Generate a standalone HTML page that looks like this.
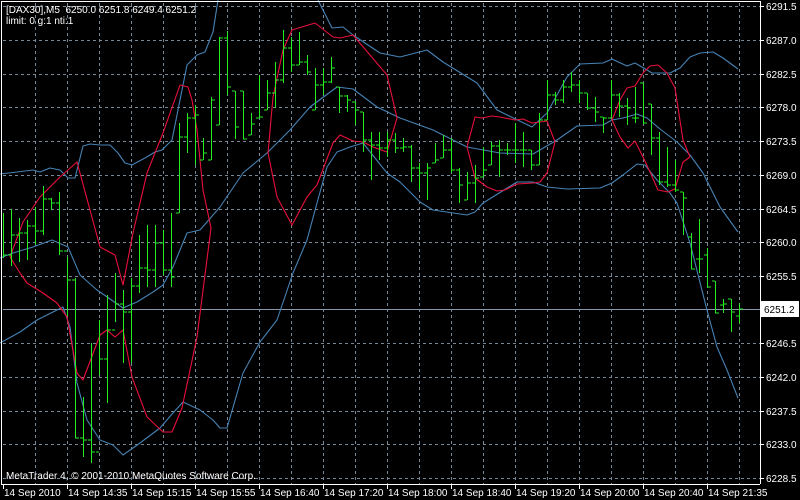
<!DOCTYPE html>
<html><head><meta charset="utf-8"><style>
html,body{margin:0;padding:0;background:#000;width:800px;height:500px;overflow:hidden}
svg{display:block}
text{font-family:"Liberation Sans",sans-serif;font-size:10px;fill:#fff}
</style></head><body>
<svg width="800" height="500" viewBox="0 0 800 500" xmlns="http://www.w3.org/2000/svg">
<rect width="800" height="500" fill="#000"/>
<g stroke="#778899" stroke-width="1" stroke-dasharray="3,3" shape-rendering="crispEdges">
<path d="M3 6.5H760M3 40.5H760M3 74.5H760M3 107.5H760M3 141.5H760M3 175.5H760M3 209.5H760M3 242.5H760M3 276.5H760M3 343.5H760M3 377.5H760M3 411.5H760M3 444.5H760M3 478.5H760"/>
<path d="M35.5 3V484M67.5 3V484M99.5 3V484M131.5 3V484M163.5 3V484M195.5 3V484M227.5 3V484M259.5 3V484M291.5 3V484M323.5 3V484M355.5 3V484M387.5 3V484M419.5 3V484M451.5 3V484M483.5 3V484M515.5 3V484M547.5 3V484M579.5 3V484M611.5 3V484M643.5 3V484M675.5 3V484M707.5 3V484M739.5 3V484"/>
</g>
<path d="M3 309.5H760" stroke="#8796aa" stroke-width="1" shape-rendering="crispEdges"/>
<g fill="none" stroke-width="1.1" stroke-linejoin="round">
<polyline stroke="#4682b4" points="0,174 17,172 33,170 40,172 50,168 60,170 68,178 75,178 83,146 90,144 100,145 110,145 118,153 125,163 132,165 145,158 155,152 162,150 172,140 180,100 187,65 197,55 205,52 213,32 218,0"/>
<polyline stroke="#4682b4" points="318,0 332,28 343,27 353,35 380,53 400,57 427,50 443,62 477,83 497,110 532,127 547,113 567,77 580,64 603,63 612,59 627,66 635,63 652,73 670,73 680,68 690,57 700,53 713,52 723,58 738,69"/>
<polyline stroke="#4682b4" points="0,258 13,253 33,247 52,240 68,247 80,275 97,290 123,308 137,302 153,292 163,285 173,267 187,233 200,230 220,207 243,173 267,153 290,130 310,107 337,87 353,89 377,107 400,118 433,130 467,147 500,153 533,154 557,140 577,126 603,125 612,120 623,118 637,114 647,118 660,129 677,142 690,155 703,173 720,207 738,232"/>
<polyline stroke="#4682b4" points="0,343 20,332 37,320 63,307 70,327 77,383 87,420 100,440 113,445 123,455 140,443 160,428 173,413 183,402 200,410 213,420 220,428 227,428 243,373 260,342 277,320 293,273 307,240 317,203 327,167 337,152 350,147 363,143 387,173 400,182 420,202 433,210 467,215 475,212 483,203 517,182 533,182 547,187 567,189 600,188 612,183 623,175 637,164 645,165 657,180 670,193 677,203 690,243 707,310 717,347 727,370 738,398"/>
<g stroke="#e8103c">
<polyline points="10,257 23,222 40,197 60,177 77,162 100,247 115,255 123,285 133,233 147,173 163,133 180,85 188,87 192,100 197,130 203,190 211,228"/>
<polyline points="10,257 20,273 27,283 43,293 57,303 67,317 77,373 83,380 100,335 107,330 115,337 123,330 132,377 147,417 163,432 172,432 182,408 197,337 211,228"/>
<polyline points="268,153 273,97 283,50 292,30 315,23 333,37 340,38 353,35 387,75 397,118"/>
<polyline points="268,153 277,197 292,225 307,197 317,185 333,143 340,135 353,141 363,142 373,147 387,152 397,118"/>
<polyline points="467,147 475,117 482,118 492,116 500,117 515,120 523,119 532,123 540,122 547,121 555,142"/>
<polyline points="467,147 475,178 487,187 497,191 505,190 517,184 533,183 540,182 547,173 555,142"/>
<polyline points="612,120 620,100 627,88 635,86 643,73 650,66 658,65 667,73 675,88 683,140 690,157"/>
<polyline points="612,120 620,137 628,148 635,141 643,157 650,172 658,190 668,192 675,189 683,162 690,157"/>
</g>
</g>
<g stroke="#22ee22" stroke-width="1" fill="none" shape-rendering="crispEdges">
<path d="
M3.5 213V258M3 255H7
M11.5 209V266M8 255H11M11 235H15
M19.5 218V262M16 235H19M19 233H23
M27.5 220V260M24 233H27M27 226H31
M35.5 207V245M32 226H35M35 231H39
M43.5 186V235M40 231H43M43 199H47
M51.5 198V210M48 199H51M51 203H55
M59.5 192V255M56 203H59M59 251H63
M67.5 257V316M64 251H67M67 280H71
M75.5 278V438M72 280H75M75 438H79
M83.5 397V457M80 438H83M83 440H87
M91.5 343V463M88 440H91M91 452H95
M99.5 320V375M96 452H99M99 359H103
M107.5 295V403M104 359H107M107 330H111
M115.5 273V322M112 330H115M115 304H119
M123.5 290V363M120 304H123M123 312H127
M131.5 278V363M128 312H131M131 286H135
M139.5 235V293M136 286H139M139 268H143
M147.5 225V287M144 268H147M147 270H151
M155.5 225V287M152 270H155M155 243H159
M163.5 230V275M160 243H163M163 270H167
M171.5 213V287M168 270H171M171 277H175
M179.5 123V213M176 213H179M179 137H183
M187.5 113V153M184 137H187M187 118H191
M195.5 105V165M192 118H195M195 115H199
M203.5 138V160M200 160H203M203 153H207
M211.5 97V160M208 160H211M211 100H215
M219.5 37V125M216 125H219M219 38H223
M227.5 31V95M224 38H227M227 87H231
M235.5 91V139M232 91H235M235 127H239
M243.5 91V139M240 91H243M243 139H247
M251.5 113V135M248 135H251M251 124H255
M259.5 75V118M256 118H259M259 117H263
M267.5 80V110M264 110H267M267 93H271
M275.5 62V108M272 93H275M275 80H279
M283.5 30V83M280 80H283M283 48H287
M291.5 37V72M288 48H291M291 65H295
M299.5 32V65M296 65H299M299 62H303
M307.5 55V75M304 62H307M307 72H311
M315.5 68V110M312 110H315M315 85H319
M323.5 68V95M320 85H323M323 82H327
M331.5 57V83M328 82H331M331 68H335
M339.5 87V113M336 87H339M339 96H343
M347.5 95V112M344 96H347M347 100H351
M355.5 102V125M352 102H355M355 110H359
M363.5 112V152M360 112H363M363 140H367
M371.5 132V180M368 140H371M371 145H375
M379.5 132V160M376 145H379M379 148H383
M387.5 132V157M384 148H387M387 140H391
M395.5 133V153M392 140H395M395 148H399
M403.5 138V152M400 148H403M403 147H407
M411.5 145V182M408 147H411M411 168H415
M419.5 163V190M416 168H419M419 173H423
M427.5 163V200M424 173H427M427 168H431
M435.5 143V163M432 163H435M435 160H439
M443.5 135V158M440 158H443M443 150H447
M451.5 138V173M448 150H451M451 170H455
M459.5 168V203M456 170H459M459 185H463
M467.5 172V200M464 200H467M467 183H471
M475.5 165V203M472 183H475M475 178H479
M483.5 147V177M480 177H483M483 170H487
M491.5 142V165M488 165H491M491 146H495
M499.5 140V177M496 146H499M499 150H503
M507.5 143V155M504 150H507M507 150H511
M515.5 123V163M512 150H515M515 150H519
M523.5 132V167M520 150H523M523 150H527
M531.5 150V170M528 150H531M531 165H535
M539.5 113V165M536 165H539M539 120H543
M547.5 80V120M544 120H547M547 95H551
M555.5 92V105M552 95H555M555 100H559
M563.5 80V103M560 100H563M563 87H567
M571.5 72V92M568 87H571M571 85H575
M579.5 80V103M576 85H579M579 93H583
M587.5 93V110M584 93H587M587 108H591
M595.5 97V122M592 108H595M595 112H599
M603.5 117V133M600 117H603M603 118H607
M611.5 80V118M608 118H611M611 95H615
M619.5 93V117M616 95H619M619 106H623
M627.5 98V125M624 106H627M627 108H631
M635.5 87V123M632 118H635M635 118H639
M643.5 83V124M640 83H643M643 123H647
M651.5 104V155M648 104H651M651 138H655
M659.5 132V185M656 138H659M659 182H663
M667.5 147V187M664 182H667M667 185H671
M675.5 160V192M672 185H675M675 190H679
M683.5 192V235M680 192H683M683 198H687
M691.5 233V269M688 237H691M691 269H695
M699.5 219V273M696 259H699M699 259H703
M707.5 248V287M704 255H707M707 287H711
M715.5 281V313M712 281H715M715 313H719
M723.5 299V313M720 305H723M723 304H727
M731.5 299V332M728 299H731M731 312H735
M739.5 303V323M736 316H739M739 309H743
"/>
</g>
<g stroke="#fff" stroke-width="1" fill="none" shape-rendering="crispEdges">
<path d="M1.5 1V484M1 1.5H760M760.5 1V484M1 484.5H760"/>
<path d="M761 6.5H764M761 40.5H764M761 74.5H764M761 107.5H764M761 141.5H764M761 175.5H764M761 209.5H764M761 242.5H764M761 276.5H764M761 343.5H764M761 377.5H764M761 411.5H764M761 444.5H764M761 478.5H764"/>
<path d="M3.5 485V489M67.5 485V489M131.5 485V489M195.5 485V489M259.5 485V489M323.5 485V489M387.5 485V489M451.5 485V489M515.5 485V489M579.5 485V489M643.5 485V489M707.5 485V489"/>
</g>
<rect x="761" y="301" width="38" height="16" fill="#fff"/>
<text x="764" y="313" style="fill:#000">6251.2</text>
<g>
<text x="766" y="10">6291.5</text>
<text x="766" y="44">6287.0</text>
<text x="766" y="78">6282.5</text>
<text x="766" y="111">6278.0</text>
<text x="766" y="145">6273.5</text>
<text x="766" y="179">6269.0</text>
<text x="766" y="213">6264.5</text>
<text x="766" y="246">6260.0</text>
<text x="766" y="280">6255.5</text>
<text x="766" y="347">6246.5</text>
<text x="766" y="381">6242.0</text>
<text x="766" y="415">6237.5</text>
<text x="766" y="448">6233.0</text>
<text x="766" y="482">6228.5</text>
</g>
<g>
<text x="4" y="496">14 Sep 2010</text>
<text x="68" y="496">14 Sep 14:35</text>
<text x="132" y="496">14 Sep 15:15</text>
<text x="196" y="496">14 Sep 15:55</text>
<text x="260" y="496">14 Sep 16:40</text>
<text x="324" y="496">14 Sep 17:20</text>
<text x="388" y="496">14 Sep 18:00</text>
<text x="452" y="496">14 Sep 18:40</text>
<text x="516" y="496">14 Sep 19:20</text>
<text x="580" y="496">14 Sep 20:00</text>
<text x="644" y="496">14 Sep 20:40</text>
<text x="708" y="496">14 Sep 21:35</text>
</g>
<text x="6" y="13">[DAX30],M5 &#160;6250.0 6251.8 6249.4 6251.2</text>
<text x="6" y="24">limit: 0 g:1 nti:1</text>
<text x="6" y="479">MetaTrader 4, © 2001-2010 MetaQuotes Software Corp.</text>
</svg>
</body></html>
